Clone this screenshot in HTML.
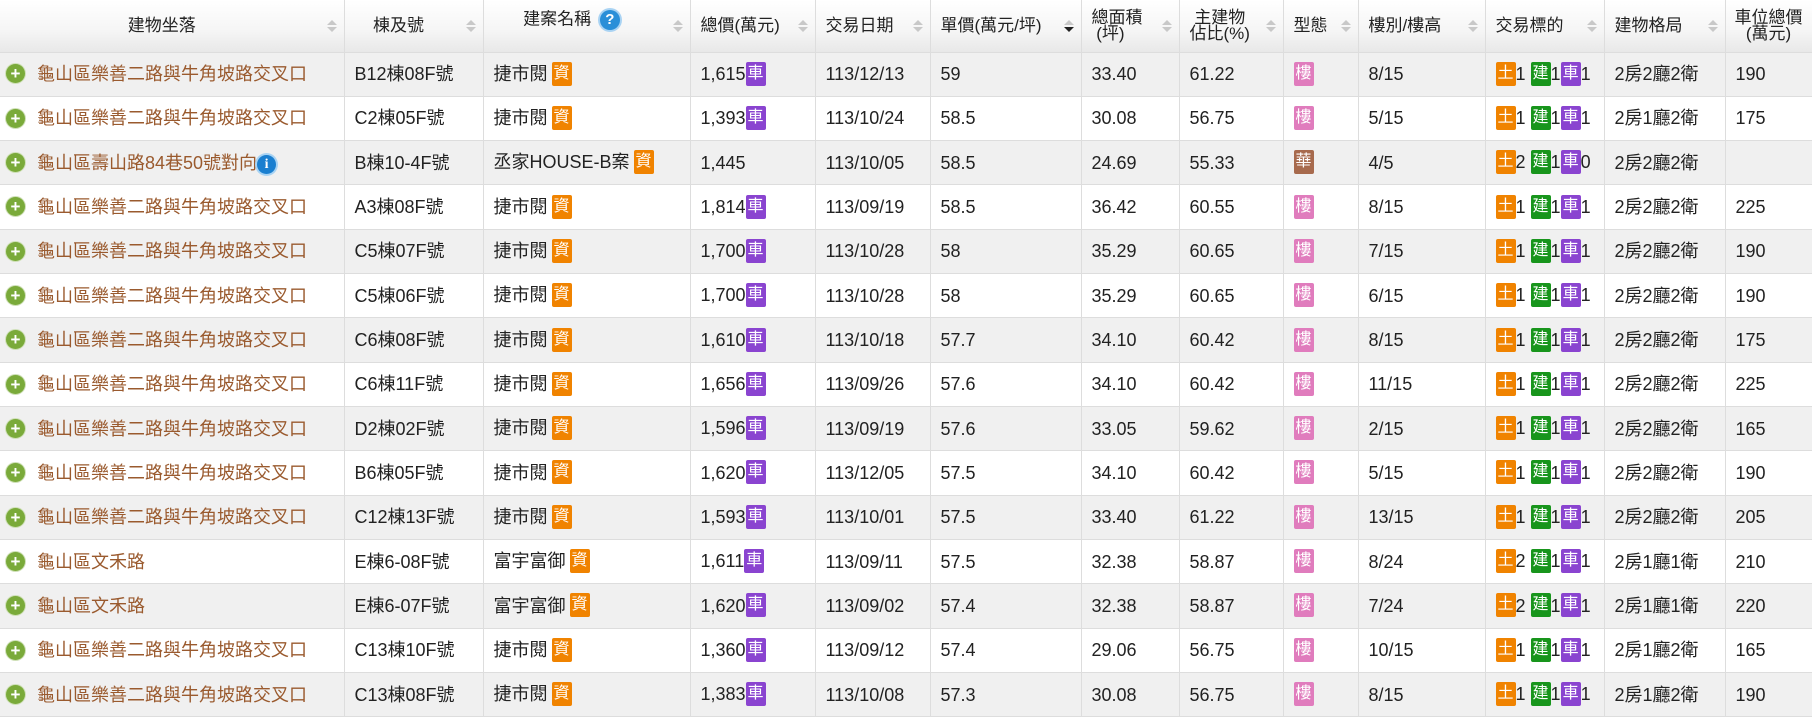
<!DOCTYPE html>
<html><head><meta charset="utf-8"><style>
body{margin:0;background:#fff;font-family:"Liberation Sans","Noto Sans CJK TC",sans-serif;font-size:18px;color:#222;}
table{border-collapse:collapse;table-layout:fixed;width:1812px;}
th,td{border-right:1px solid #ddd;border-bottom:1px solid #ddd;padding:0 0 0 10px;white-space:nowrap;overflow:hidden;box-sizing:border-box;line-height:22px;vertical-align:middle}
th{height:52px;background:linear-gradient(#fff,#f5f5f5 60%,#e8e8e8);font-weight:normal;font-size:17px;line-height:16px;position:relative;text-align:left;}
th.c{text-align:center;padding:0 20px 0 0}
th .s{position:absolute;right:12px;top:26px;width:0;height:0;}
th .s:before{content:"";position:absolute;left:-5px;top:-6px;border:5px solid transparent;border-bottom:5px solid #c8c8c8;border-top:0}
th .s:after{content:"";position:absolute;left:-5px;top:1px;border:5px solid transparent;border-top:5px solid #c8c8c8;border-bottom:0}
th .s.d:after{border-top-color:#222}
td{height:44.33px;}
tr:nth-child(even) td{background:#f0f0f0}
.addr{color:#9a5a2e;padding-left:6px}
.plus{display:inline-block;width:19px;height:19px;border-radius:50%;background:#7aaa3a;box-shadow:0 0 0 1px #cfe0b8;color:#fff;font-size:17px;line-height:19px;text-align:center;vertical-align:middle;margin:-3px 12px 0 0;font-weight:bold}
.b{display:inline-block;color:#fff;font-size:16px;line-height:24px;padding:0 2px;border-radius:2px;vertical-align:middle;margin-top:-3px}
.car{background:#8a44d0}.zi{background:#f08300;margin-left:4px}.lou{background:#e07cbd}.hua{background:#a76a4d}.tu{background:#f08300}.jian{background:#18951c}
.q{display:inline-block;width:20px;height:20px;border-radius:50%;background:#2a8fd8;color:#fff;font-size:15px;line-height:20px;text-align:center;font-weight:bold;vertical-align:middle;margin-left:4px;box-shadow:0 0 0 2px #a9d3f3}
.i{display:inline-block;width:19px;height:19px;border-radius:50%;background:#1a7fd0;color:#fff;font-size:14px;line-height:19px;text-align:center;font-weight:bold;font-family:"Liberation Serif",serif;vertical-align:middle;box-shadow:0 0 0 2px #a9d3f3}
</style></head><body>
<table>
<colgroup><col style="width:344px"><col style="width:139px"><col style="width:207px"><col style="width:125px"><col style="width:115px"><col style="width:151px"><col style="width:98px"><col style="width:104px"><col style="width:75px"><col style="width:127px"><col style="width:119px"><col style="width:121px"><col style="width:87px"></colgroup>
<tr>
<th class="c">建物坐落<span class="s"></span></th>
<th class="c" style="padding-right:30px">棟及號<span class="s"></span></th>
<th class="c" style="padding-right:30px;vertical-align:top;padding-top:10px">建案名稱 <span class="q">?</span><span class="s"></span></th>
<th>總價(萬元)<span class="s"></span></th>
<th>交易日期<span class="s"></span></th>
<th>單價(萬元/坪)<span class="s d"></span></th>
<th>總面積<br>&nbsp;(坪)<span class="s"></span></th>
<th>&nbsp;主建物<br>佔比(%)<span class="s"></span></th>
<th>型態<span class="s"></span></th>
<th>樓別/樓高<span class="s"></span></th>
<th>交易標的<span class="s"></span></th>
<th>建物格局<span class="s"></span></th>
<th style="text-align:center;padding:0">車位總價<br>(萬元)</th>
</tr>
<tr><td class="addr"><span class="plus">+</span>龜山區樂善二路與牛角坡路交叉口</td><td>B12棟08F號</td><td>捷市閱<span class="b zi">資</span></td><td>1,615<span class="b car">車</span></td><td>113/12/13</td><td>59</td><td>33.40</td><td>61.22</td><td><span class="b lou">樓</span></td><td>8/15</td><td><span class="b tu">土</span>1 <span class="b jian">建</span>1<span class="b car">車</span>1</td><td>2房2廳2衛</td><td>190</td></tr>
<tr><td class="addr"><span class="plus">+</span>龜山區樂善二路與牛角坡路交叉口</td><td>C2棟05F號</td><td>捷市閱<span class="b zi">資</span></td><td>1,393<span class="b car">車</span></td><td>113/10/24</td><td>58.5</td><td>30.08</td><td>56.75</td><td><span class="b lou">樓</span></td><td>5/15</td><td><span class="b tu">土</span>1 <span class="b jian">建</span>1<span class="b car">車</span>1</td><td>2房1廳2衛</td><td>175</td></tr>
<tr><td class="addr"><span class="plus">+</span>龜山區壽山路84巷50號對向<span class="i">i</span></td><td>B棟10-4F號</td><td>丞家HOUSE-B案<span class="b zi">資</span></td><td>1,445</td><td>113/10/05</td><td>58.5</td><td>24.69</td><td>55.33</td><td><span class="b hua">華</span></td><td>4/5</td><td><span class="b tu">土</span>2 <span class="b jian">建</span>1<span class="b car">車</span>0</td><td>2房2廳2衛</td><td></td></tr>
<tr><td class="addr"><span class="plus">+</span>龜山區樂善二路與牛角坡路交叉口</td><td>A3棟08F號</td><td>捷市閱<span class="b zi">資</span></td><td>1,814<span class="b car">車</span></td><td>113/09/19</td><td>58.5</td><td>36.42</td><td>60.55</td><td><span class="b lou">樓</span></td><td>8/15</td><td><span class="b tu">土</span>1 <span class="b jian">建</span>1<span class="b car">車</span>1</td><td>2房2廳2衛</td><td>225</td></tr>
<tr><td class="addr"><span class="plus">+</span>龜山區樂善二路與牛角坡路交叉口</td><td>C5棟07F號</td><td>捷市閱<span class="b zi">資</span></td><td>1,700<span class="b car">車</span></td><td>113/10/28</td><td>58</td><td>35.29</td><td>60.65</td><td><span class="b lou">樓</span></td><td>7/15</td><td><span class="b tu">土</span>1 <span class="b jian">建</span>1<span class="b car">車</span>1</td><td>2房2廳2衛</td><td>190</td></tr>
<tr><td class="addr"><span class="plus">+</span>龜山區樂善二路與牛角坡路交叉口</td><td>C5棟06F號</td><td>捷市閱<span class="b zi">資</span></td><td>1,700<span class="b car">車</span></td><td>113/10/28</td><td>58</td><td>35.29</td><td>60.65</td><td><span class="b lou">樓</span></td><td>6/15</td><td><span class="b tu">土</span>1 <span class="b jian">建</span>1<span class="b car">車</span>1</td><td>2房2廳2衛</td><td>190</td></tr>
<tr><td class="addr"><span class="plus">+</span>龜山區樂善二路與牛角坡路交叉口</td><td>C6棟08F號</td><td>捷市閱<span class="b zi">資</span></td><td>1,610<span class="b car">車</span></td><td>113/10/18</td><td>57.7</td><td>34.10</td><td>60.42</td><td><span class="b lou">樓</span></td><td>8/15</td><td><span class="b tu">土</span>1 <span class="b jian">建</span>1<span class="b car">車</span>1</td><td>2房2廳2衛</td><td>175</td></tr>
<tr><td class="addr"><span class="plus">+</span>龜山區樂善二路與牛角坡路交叉口</td><td>C6棟11F號</td><td>捷市閱<span class="b zi">資</span></td><td>1,656<span class="b car">車</span></td><td>113/09/26</td><td>57.6</td><td>34.10</td><td>60.42</td><td><span class="b lou">樓</span></td><td>11/15</td><td><span class="b tu">土</span>1 <span class="b jian">建</span>1<span class="b car">車</span>1</td><td>2房2廳2衛</td><td>225</td></tr>
<tr><td class="addr"><span class="plus">+</span>龜山區樂善二路與牛角坡路交叉口</td><td>D2棟02F號</td><td>捷市閱<span class="b zi">資</span></td><td>1,596<span class="b car">車</span></td><td>113/09/19</td><td>57.6</td><td>33.05</td><td>59.62</td><td><span class="b lou">樓</span></td><td>2/15</td><td><span class="b tu">土</span>1 <span class="b jian">建</span>1<span class="b car">車</span>1</td><td>2房2廳2衛</td><td>165</td></tr>
<tr><td class="addr"><span class="plus">+</span>龜山區樂善二路與牛角坡路交叉口</td><td>B6棟05F號</td><td>捷市閱<span class="b zi">資</span></td><td>1,620<span class="b car">車</span></td><td>113/12/05</td><td>57.5</td><td>34.10</td><td>60.42</td><td><span class="b lou">樓</span></td><td>5/15</td><td><span class="b tu">土</span>1 <span class="b jian">建</span>1<span class="b car">車</span>1</td><td>2房2廳2衛</td><td>190</td></tr>
<tr><td class="addr"><span class="plus">+</span>龜山區樂善二路與牛角坡路交叉口</td><td>C12棟13F號</td><td>捷市閱<span class="b zi">資</span></td><td>1,593<span class="b car">車</span></td><td>113/10/01</td><td>57.5</td><td>33.40</td><td>61.22</td><td><span class="b lou">樓</span></td><td>13/15</td><td><span class="b tu">土</span>1 <span class="b jian">建</span>1<span class="b car">車</span>1</td><td>2房2廳2衛</td><td>205</td></tr>
<tr><td class="addr"><span class="plus">+</span>龜山區文禾路</td><td>E棟6-08F號</td><td>富宇富御<span class="b zi">資</span></td><td>1,611<span class="b car">車</span></td><td>113/09/11</td><td>57.5</td><td>32.38</td><td>58.87</td><td><span class="b lou">樓</span></td><td>8/24</td><td><span class="b tu">土</span>2 <span class="b jian">建</span>1<span class="b car">車</span>1</td><td>2房1廳1衛</td><td>210</td></tr>
<tr><td class="addr"><span class="plus">+</span>龜山區文禾路</td><td>E棟6-07F號</td><td>富宇富御<span class="b zi">資</span></td><td>1,620<span class="b car">車</span></td><td>113/09/02</td><td>57.4</td><td>32.38</td><td>58.87</td><td><span class="b lou">樓</span></td><td>7/24</td><td><span class="b tu">土</span>2 <span class="b jian">建</span>1<span class="b car">車</span>1</td><td>2房1廳1衛</td><td>220</td></tr>
<tr><td class="addr"><span class="plus">+</span>龜山區樂善二路與牛角坡路交叉口</td><td>C13棟10F號</td><td>捷市閱<span class="b zi">資</span></td><td>1,360<span class="b car">車</span></td><td>113/09/12</td><td>57.4</td><td>29.06</td><td>56.75</td><td><span class="b lou">樓</span></td><td>10/15</td><td><span class="b tu">土</span>1 <span class="b jian">建</span>1<span class="b car">車</span>1</td><td>2房1廳2衛</td><td>165</td></tr>
<tr><td class="addr"><span class="plus">+</span>龜山區樂善二路與牛角坡路交叉口</td><td>C13棟08F號</td><td>捷市閱<span class="b zi">資</span></td><td>1,383<span class="b car">車</span></td><td>113/10/08</td><td>57.3</td><td>30.08</td><td>56.75</td><td><span class="b lou">樓</span></td><td>8/15</td><td><span class="b tu">土</span>1 <span class="b jian">建</span>1<span class="b car">車</span>1</td><td>2房1廳2衛</td><td>190</td></tr>
</table>
</body></html>
